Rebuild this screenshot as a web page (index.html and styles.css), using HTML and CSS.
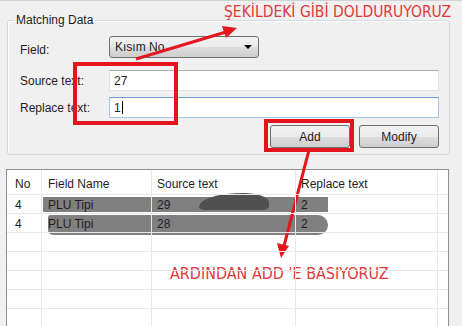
FILE: index.html
```html
<!DOCTYPE html>
<html lang="tr">
<head>
    <meta charset="UTF-8">
    <meta name="viewport" content="width=device-width, initial-scale=1.0">
    <title>Matching Data</title>
    <link rel="stylesheet" href="styles.css">
</head>
<body>
    <div class="window">
        <fieldset class="group">
            <legend>Matching Data</legend>
            <div class="form">
                <label>Field:</label>
                <div class="combo"><span>Kısım No</span><span class="caret"></span></div>
                <label>Source text:</label>
                <div class="textbox">27</div>
                <label>Replace text:</label>
                <div class="textbox focused">1<span class="cursor"></span></div>
            </div>
            <div class="buttons">
                <button class="btn">Add</button>
                <button class="btn">Modify</button>
            </div>
        </fieldset>

        <div class="list">
            <!-- redaction marks over the data rows -->
            <span class="blob blob-row1"></span>
            <span class="blob blob-dark"></span>
            <span class="blob blob-row2"></span>

            <div class="grid">
                <div class="cell head">No</div>
                <div class="cell head">Field Name</div>
                <div class="cell head">Source text</div>
                <div class="cell head">Replace text</div>
                <div class="cell head"></div>

                <div class="cell">4</div>
                <div class="cell">PLU Tipi</div>
                <div class="cell">29</div>
                <div class="cell">2</div>
                <div class="cell"></div>

                <div class="cell">4</div>
                <div class="cell">PLU Tipi</div>
                <div class="cell">28</div>
                <div class="cell">2</div>
                <div class="cell"></div>
            </div>
            <div class="grid empty" id="empty-rows"></div>
        </div>
    </div>

    <!-- annotations drawn over the screenshot -->
    <div class="annot">
        <div class="note note-top">ŞEKİLDEKİ GİBİ DOLDURUYORUZ</div>
        <div class="note note-bottom">ARDINDAN ADD 'E BASIYORUZ</div>
        <div class="mark mark-text"></div>
        <div class="mark mark-add"></div>
        <svg class="arrows" width="462" height="326" viewBox="0 0 462 326">
            <line x1="136" y1="59" x2="226" y2="32" stroke="#e3171d" stroke-width="3"/>
            <polygon points="237,28 222,26 226,38" fill="#e3171d"/>
            <line x1="309" y1="150" x2="284" y2="246" stroke="#e3171d" stroke-width="3"/>
            <polygon points="281,258 277,243 289,246" fill="#e3171d"/>
        </svg>
    </div>

    <script>
        // fill the list with empty rows down to the bottom edge
        const empty = document.getElementById('empty-rows');
        for (let i = 0; i < 5 * 5; i++) {
            const c = document.createElement('div');
            c.className = 'cell';
            empty.appendChild(c);
        }
    </script>
</body>
</html>
```

FILE: styles.css
```css
body {
    margin: 0;
    width: 462px;
    height: 326px;
    overflow: hidden;
    position: relative;
    background-color: #f0f0f0;
    font-family: "Liberation Sans", Arial, sans-serif;
    font-size: 12px;
    color: #1e1e1e;
}

.window {
    height: 326px;
    box-sizing: border-box;
    border-top: 1px solid #d2d2d2;
    overflow: hidden;
}

/* Group box */
.group {
    margin: 12px 12px 0 7px;
    padding: 8px 10px 6px 12px;
    border: 1px solid #d5d9dc;
    border-radius: 3px;
    box-shadow: inset 1px 1px 0 #fff;
}

.group legend {
    margin-left: -6px;
    padding: 0 2px;
    line-height: 15px;
}

.form {
    display: grid;
    grid-template-columns: 89px 1fr;
    row-gap: 6px;
    align-items: center;
}

.combo {
    position: relative;
    width: 150px;
    height: 22px;
    box-sizing: border-box;
    margin-bottom: 6px;
    padding: 3px 0 0 5px;
    border: 1px solid #707070;
    border-radius: 3px;
    background: linear-gradient(#f2f2f2 0%, #ebebeb 50%, #dddddd 51%, #cfcfcf 100%);
}

.caret {
    position: absolute;
    right: 6px;
    top: 8px;
    border-left: 4px solid transparent;
    border-right: 4px solid transparent;
    border-top: 4px solid #000;
}

.textbox {
    height: 21px;
    box-sizing: border-box;
    padding: 3px 0 0 4px;
    background: #fff;
    border: 1px solid #dfe3e8;
    border-top-color: #abadb3;
}

.textbox.focused {
    border-color: #a6c6e6;
    border-top-color: #6f9dcf;
}

.cursor {
    display: inline-block;
    width: 1px;
    height: 13px;
    margin-left: 1px;
    vertical-align: -2px;
    background: #000;
}

.buttons {
    display: flex;
    justify-content: flex-end;
    gap: 9px;
    margin-top: 7px;
}

.btn {
    width: 80px;
    height: 23px;
    padding: 0;
    font: inherit;
    color: #1e1e1e;
    border: 1px solid #707070;
    border-radius: 3px;
    background: linear-gradient(#f2f2f2 0%, #ebebeb 50%, #dddddd 51%, #cfcfcf 100%);
}

/* List view */
.list {
    position: relative;
    margin: 14px 13px 0 6px;
    height: 157px;
    overflow: hidden;
    border: 1px solid #8e8f8f;
    border-bottom: none;
    background: #fff;
}

.grid {
    display: grid;
    grid-template-columns: 35px 110px 144px 142px 1fr;
}

.cell {
    position: relative;
    z-index: 1;
    height: 19px;
    box-sizing: border-box;
    padding: 3px 0 0 8px;
    border-right: 1px solid #e8e8e8;
    border-bottom: 1px solid #e8e8e8;
    white-space: nowrap;
}

.cell:nth-child(5n+2) { padding-left: 6px; }
.cell:nth-child(5n+3),
.cell:nth-child(5n+4) { padding-left: 5px; }
.cell:nth-child(5n) { border-right: none; }

.cell.head {
    height: 25px;
    padding-top: 7px;
}

.blob {
    position: absolute;
    z-index: 0;
    background: #808080;
}

.blob-row1 {
    left: 36px;
    top: 27px;
    width: 285px;
    height: 15px;
}

.blob-dark {
    left: 192px;
    top: 23px;
    width: 70px;
    height: 17px;
    background: #505050;
    border-radius: 70% 40% 10% 10% / 90% 60% 20% 20%;
}

.blob-row2 {
    left: 41px;
    top: 45px;
    width: 280px;
    height: 20px;
    border-radius: 3px 12px 12px 6px;
}

/* Annotations */
.annot {
    position: absolute;
    inset: 0;
    pointer-events: none;
}

.arrows {
    position: absolute;
    left: 0;
    top: 0;
}

.note {
    position: absolute;
    color: #e2383a;
    font-family: "DejaVu Sans Condensed", "DejaVu Sans", sans-serif;
    font-stretch: condensed;
    white-space: nowrap;
}

.note-top {
    left: 224px;
    top: 3px;
    font-size: 15.5px;
}

.note-bottom {
    left: 170px;
    top: 264px;
    font-size: 16px;
}

.mark {
    position: absolute;
    border: 4px solid #e3141b;
}

.mark-text {
    left: 73px;
    top: 62px;
    width: 97px;
    height: 55px;
}

.mark-add {
    left: 264px;
    top: 119px;
    width: 82px;
    height: 25px;
}
```
